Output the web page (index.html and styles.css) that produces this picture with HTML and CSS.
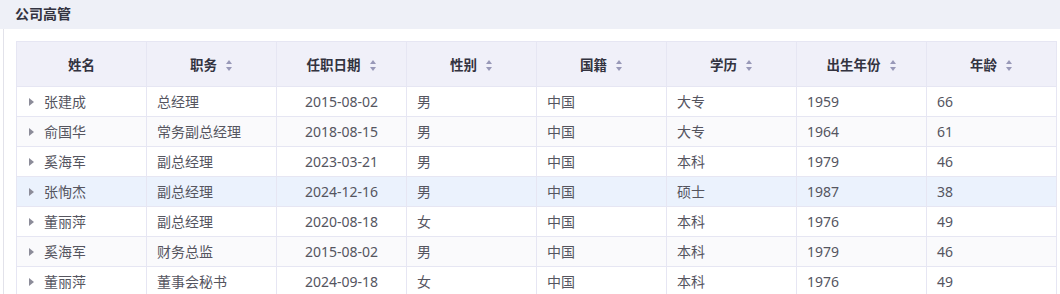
FILE: index.html
```html
<!DOCTYPE html>
<html lang="zh">
<head>
<meta charset="utf-8">
<link rel="stylesheet" href="styles.css">
</head>
<body>
<div class="title">公司高管</div>
<div class="panel">
  <table class="grid">
    <thead>
      <tr>
        <th>姓名</th>
        <th>职务<i class="sort"></i></th>
        <th>任职日期<i class="sort"></i></th>
        <th>性别<i class="sort"></i></th>
        <th>国籍<i class="sort"></i></th>
        <th>学历<i class="sort"></i></th>
        <th>出生年份<i class="sort"></i></th>
        <th>年龄<i class="sort"></i></th>
      </tr>
    </thead>
    <tbody>
      <tr><td class="name"><span class="caret"></span>张建成</td><td>总经理</td><td class="c">2015-08-02</td><td>男</td><td>中国</td><td>大专</td><td>1959</td><td>66</td></tr>
      <tr class="alt"><td class="name"><span class="caret"></span>俞国华</td><td>常务副总经理</td><td class="c">2018-08-15</td><td>男</td><td>中国</td><td>大专</td><td>1964</td><td>61</td></tr>
      <tr><td class="name"><span class="caret"></span>奚海军</td><td>副总经理</td><td class="c">2023-03-21</td><td>男</td><td>中国</td><td>本科</td><td>1979</td><td>46</td></tr>
      <tr class="hover"><td class="name"><span class="caret"></span>张恂杰</td><td>副总经理</td><td class="c">2024-12-16</td><td>男</td><td>中国</td><td>硕士</td><td>1987</td><td>38</td></tr>
      <tr><td class="name"><span class="caret"></span>董丽萍</td><td>副总经理</td><td class="c">2020-08-18</td><td>女</td><td>中国</td><td>本科</td><td>1976</td><td>49</td></tr>
      <tr class="alt"><td class="name"><span class="caret"></span>奚海军</td><td>财务总监</td><td class="c">2015-08-02</td><td>男</td><td>中国</td><td>本科</td><td>1979</td><td>46</td></tr>
      <tr><td class="name"><span class="caret"></span>董丽萍</td><td>董事会秘书</td><td class="c">2024-09-18</td><td>女</td><td>中国</td><td>本科</td><td>1976</td><td>49</td></tr>
    </tbody>
  </table>
</div>
</body>
</html>
```
FILE: styles.css
```css
html, body {
  margin: 0;
  padding: 0;
  background: #ffffff;
  font-family: "Noto Sans", "Noto Sans CJK SC", sans-serif;
  font-size: 14px;
  color: #55555f;
  overflow: hidden;
}
.title {
  height: 29px;
  line-height: 28px;
  background: #eef0f7;
  padding-left: 15px;
  font-weight: bold;
  color: #333340;
  font-size: 14px;
}
.panel {
  margin-left: 3px;
  border-left: 1px solid #e2e2ea;
  padding: 12px 0 0 12px;
  height: 300px;
}
.grid {
  border-collapse: collapse;
  table-layout: fixed;
  width: 1041px;
}
.grid th, .grid td {
  width: 130px;
  border: 1px solid #e6e6f3;
  box-sizing: border-box;
  padding: 0 10px;
  white-space: nowrap;
  overflow: hidden;
}
.grid th {
  height: 45px;
  background: #f0f0f9;
  color: #333340;
  font-weight: bold;
  font-size: 13.5px;
  text-align: center;
}
.grid td {
  height: 30px;
  line-height: 28px;
  text-align: left;
}
.grid td.c {
  text-align: center;
}
.grid td.name {
  padding-left: 12px;
}
.grid tr.alt td {
  background: #fafafc;
}
.grid tr.hover td {
  background: #ebf2fd;
}
.caret {
  display: inline-block;
  width: 0;
  height: 0;
  border-top: 4px solid transparent;
  border-bottom: 4px solid transparent;
  border-left: 5px solid #8c8c99;
  margin-right: 10px;
  vertical-align: 1px;
}
.sort {
  display: inline-block;
  position: relative;
  width: 7px;
  height: 11px;
  margin-left: 9px;
  vertical-align: -1px;
}
.sort::before, .sort::after {
  content: "";
  position: absolute;
  left: 0;
  width: 0;
  height: 0;
  border-left: 3.5px solid transparent;
  border-right: 3.5px solid transparent;
}
.sort::before {
  top: 0;
  border-bottom: 4px solid #9898b8;
}
.sort::after {
  bottom: 0;
  border-top: 4px solid #9898b8;
}
```
